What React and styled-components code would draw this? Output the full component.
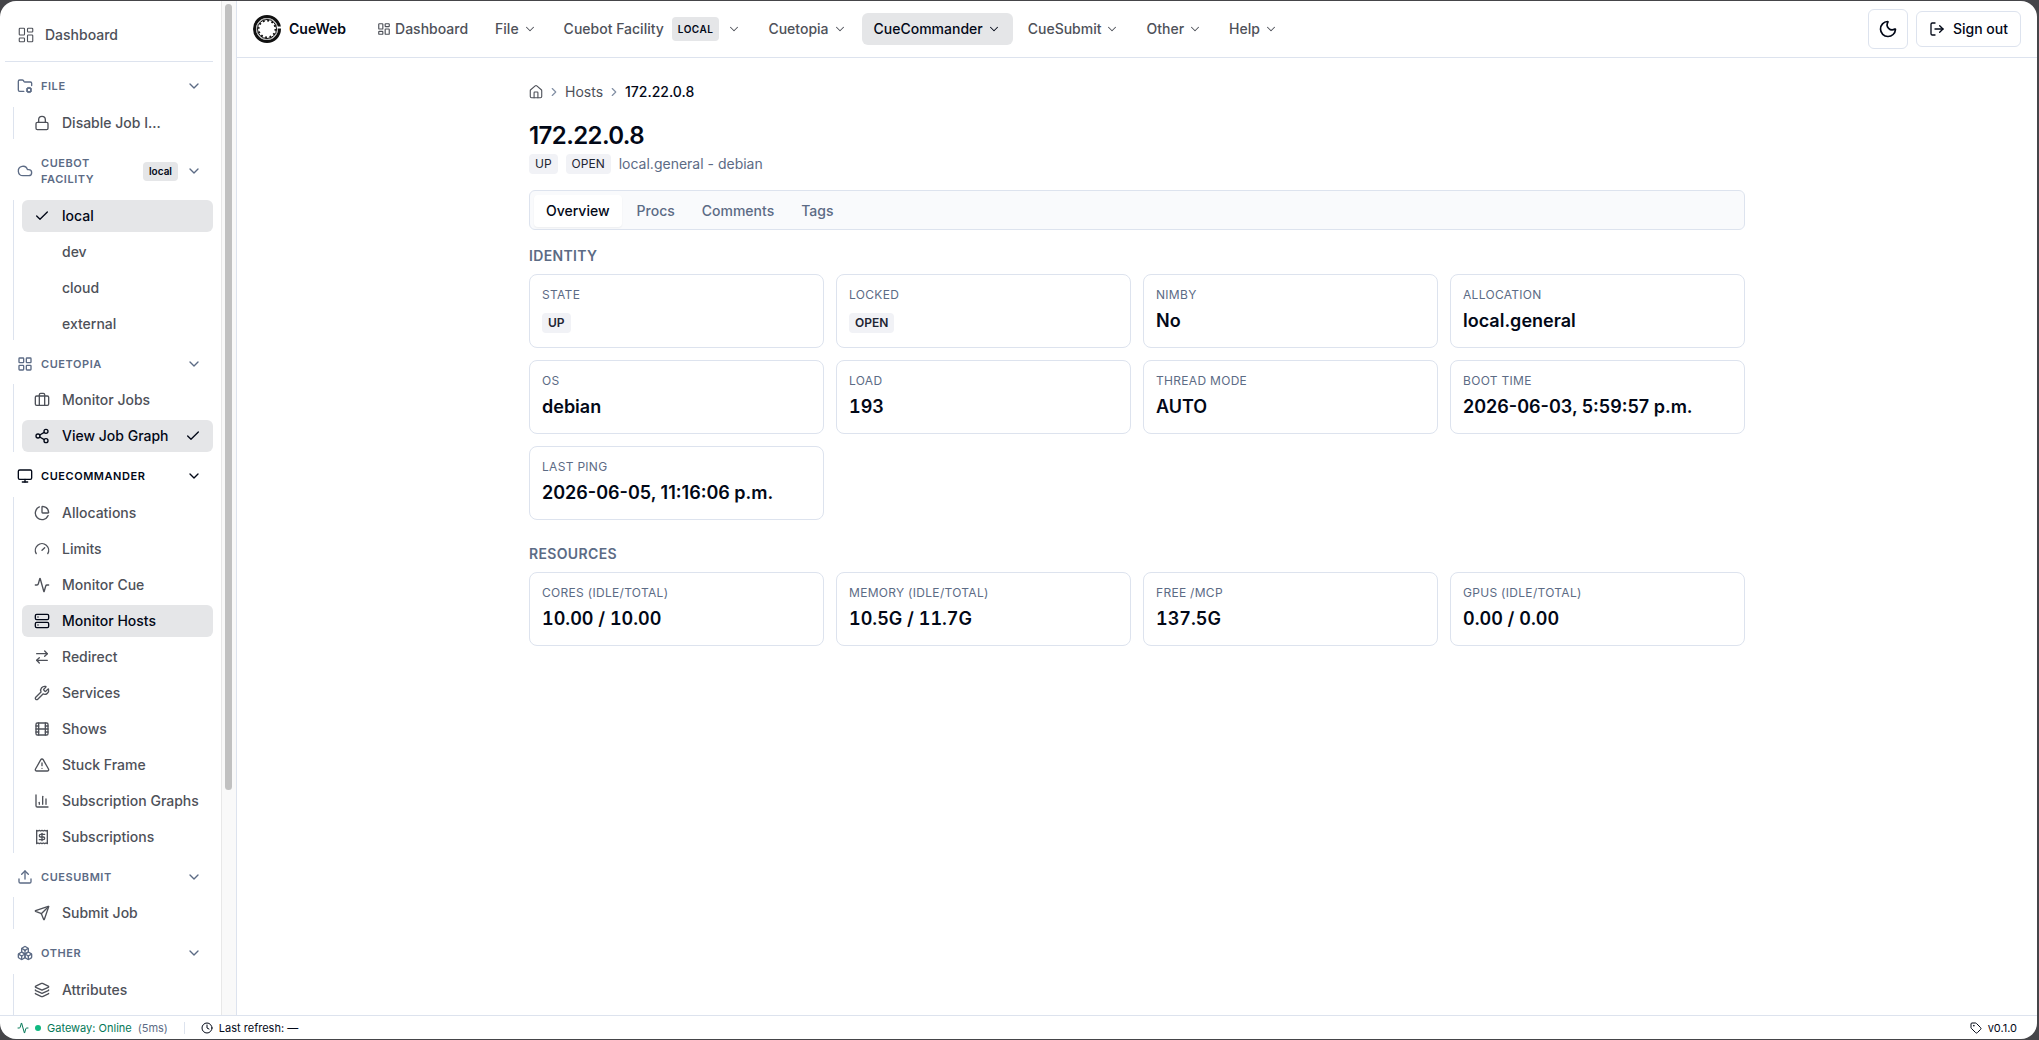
import React from 'react'
import styled, { createGlobalStyle } from 'styled-components'
import {
    Activity, Boxes, Briefcase, ChartColumn, ChartPie, Check, ChevronDown, ChevronRight,
    Clock, Cloud, Film, FolderCog, Gauge, House, Layers, LayoutDashboard, LayoutGrid,
    Lock, LogOut, Monitor, Moon, ArrowRightLeft, Receipt, Send, Server, Share2,
    Tag, TriangleAlert, Upload, Wrench
} from 'lucide-react'

const GlobalStyle = createGlobalStyle`
    * {
        box-sizing: border-box;
    }
    body {
        margin: 0;
        background: #454549;
        color: #020817;
        font-family: Inter, "Liberation Sans", sans-serif;
        font-size: 14px;
        line-height: 20px;
    }
    button {
        font: inherit;
        color: inherit;
        background: none;
        border: 0;
        padding: 0;
        cursor: pointer;
    }
    a {
        color: inherit;
        text-decoration: none;
    }
    h1, h2, p, ul, ol, dl, dd {
        margin: 0;
        padding: 0;
        list-style: none;
    }
    svg {
        flex-shrink: 0;
    }
`

const Frame = styled.div`
    height: 100vh;
    padding: 1px 2px 1px 0;
`

const Shell = styled.div`
    height: 100%;
    display: flex;
    flex-direction: column;
    background: #fff;
    border-radius: 16px;
    overflow: hidden;
`

const Columns = styled.div`
    flex: 1;
    min-height: 0;
    display: flex;
`

const Sidebar = styled.aside`
    width: 237px;
    flex-shrink: 0;
    display: flex;
    border-right: 1px solid #dde3ee;
    overflow: hidden;
`

const SideNav = styled.nav`
    flex: 1;
    min-width: 0;
    display: flex;
    flex-direction: column;
    padding: 16px 8px 0 5px;
    overflow: hidden;
`

const ScrollTrack = styled.div`
    width: 15px;
    padding: 3px;
    background: #f9f9f9;
    border-left: 1px solid #e8e8e8;
`

const ScrollThumb = styled.div`
    height: 78%;
    width: 7px;
    border-radius: 4px;
    background: #c1c1c1;
`

const SideTop = styled.a`
    display: flex;
    align-items: center;
    flex-shrink: 0;
    gap: 10px;
    height: 36px;
    margin-bottom: 8px;
    padding-left: 12px;
    font-weight: 500;
    color: #4e5159;
`

const SideDivider = styled.div`
    height: 1px;
    flex-shrink: 0;
    background: #dde3ee;
`

const SectionButton = styled.button`
    display: flex;
    align-items: center;
    gap: 8px;
    width: 100%;
    margin: 8px 0 4px;
    padding: 8px 11px 8px 12px;
    font-size: 11px;
    font-weight: 600;
    line-height: 1.5;
    letter-spacing: 0.05em;
    text-align: left;
    text-transform: uppercase;
    color: ${props => props.$active ? '#020817' : '#5c6b85'};
`

const SectionLabel = styled.span`
    flex: 1;
`

const SideBadge = styled.span`
    padding: 1px 6px;
    border-radius: 4px;
    background: #e5e6e8;
    color: #020817;
    font-size: 10px;
    font-weight: 600;
    line-height: 17px;
    letter-spacing: 0;
    text-transform: none;
`

const SideList = styled.ul`
    display: flex;
    flex-direction: column;
    gap: 4px;
    margin-left: 8px;
    padding-left: 8px;
    border-left: 1px solid #dde3ee;
`

const SideGroup = styled.div`
    flex-shrink: 0;

    &:last-child {
        flex: 1;
        display: flex;
        flex-direction: column;
    }
    &:last-child ${SideList} {
        flex: 1;
    }
`

const SideLink = styled.a`
    display: flex;
    align-items: center;
    gap: 12px;
    height: 32px;
    padding: 0 12px;
    border-radius: 6px;
    font-weight: 500;
    white-space: nowrap;
    color: ${props => props.$active ? '#020817' : '#4e5159'};
    background: ${props => props.$active ? '#e5e6e8' : 'transparent'};
`

const IconSlot = styled.span`
    width: 16px;
    height: 16px;
    flex-shrink: 0;
`

const SideText = styled.span`
    flex: 1;
`

const Content = styled.div`
    flex: 1;
    min-width: 0;
`

const TopBar = styled.header`
    display: flex;
    align-items: center;
    height: 57px;
    padding: 0 16px;
    border-bottom: 1px solid #dde3ee;
`

const Brand = styled.a`
    display: flex;
    align-items: center;
    gap: 8px;
    margin-right: 19px;
    font-weight: 600;
`

const Menu = styled.nav`
    display: flex;
    flex: 1;
    gap: 3px;
`

const MenuButton = styled.button`
    display: flex;
    align-items: center;
    gap: ${props => props.$wide ? 8 : 4}px;
    height: 32px;
    padding: 0 12px;
    border-radius: 6px;
    font-weight: 500;
    color: ${props => props.$active ? '#020817' : '#4e5159'};
    background: ${props => props.$active ? '#e5e6e8' : 'transparent'};
`

const FacilityBadge = styled.span`
    padding: 4px 6px;
    border-radius: 4px;
    background: #e5e6e8;
    color: #020817;
    font-size: 10px;
    font-weight: 600;
    line-height: 16px;
    letter-spacing: 0.05em;
`

const Actions = styled.div`
    display: flex;
    align-items: center;
    gap: 8px;
`

const ThemeButton = styled.button`
    display: flex;
    align-items: center;
    justify-content: center;
    width: 40px;
    height: 40px;
    border: 1px solid #dde3ee;
    border-radius: 6px;
`

const SignOut = styled.button`
    display: flex;
    align-items: center;
    gap: 8px;
    height: 36px;
    padding: 0 12px;
    border: 1px solid #dde3ee;
    border-radius: 6px;
    font-weight: 500;
`

const Page = styled.main`
    max-width: 1280px;
    margin: 0 auto;
    padding: 24px 32px;
`

const Crumbs = styled.ol`
    display: flex;
    align-items: center;
    gap: 4px;
    margin-bottom: 18px;
    color: #4e5159;

    li, a {
        display: flex;
    }
`

const CurrentCrumb = styled.span`
    font-weight: 500;
    color: #020817;
`

const Title = styled.h1`
    font-size: 24px;
    line-height: 32px;
    font-weight: 600;
    letter-spacing: -0.025em;
`

const SubTitle = styled.div`
    display: flex;
    align-items: center;
    gap: 8px;
    margin: 2px 0 16px;
    color: #5c6b85;
`

const Badge = styled.span`
    display: inline-block;
    padding: 2px 6px;
    border-radius: 4px;
    background: #f1f2f6;
    color: #1e2533;
    font-size: 12px;
    line-height: 16px;
    font-weight: ${props => props.$strong ? 600 : 400};
`

const TabBar = styled.div`
    display: flex;
    gap: 3px;
    height: 40px;
    padding: 4px;
    border: 1px solid #dde3ee;
    border-radius: 6px;
    background: #f9fafc;
`

const Tab = styled.button`
    height: 32px;
    padding: 0 12px;
    border-radius: 4px;
    font-weight: 500;
    color: ${props => props.$active ? '#020817' : '#5c6b85'};
    background: ${props => props.$active ? '#fff' : 'transparent'};
    box-shadow: ${props => props.$active ? '0 1px 2px rgba(0, 0, 0, 0.05)' : 'none'};
`

const Section = styled.section`
    margin-top: ${props => props.$first ? 16 : 24}px;
`

const SectionTitle = styled.h2`
    margin-bottom: 8px;
    font-size: 14px;
    line-height: 20px;
    font-weight: 600;
    letter-spacing: 0.025em;
    text-transform: uppercase;
    color: #5c6b85;
`

const Cards = styled.dl`
    display: grid;
    grid-template-columns: repeat(4, 1fr);
    gap: 12px;
`

const Card = styled.div`
    padding: 12px;
    border: 1px solid #dde3ee;
    border-radius: 8px;
`

const CardLabel = styled.dt`
    margin-bottom: 4px;
    font-size: 12px;
    line-height: 16px;
    letter-spacing: 0.025em;
    text-transform: uppercase;
    color: #5c6b85;
`

const CardValue = styled.dd`
    height: 28px;
    font-size: 18px;
    line-height: 28px;
    font-weight: 600;
    font-variant-numeric: ${props => props.$tabular ? 'tabular-nums' : 'normal'};
`

const StatusBar = styled.footer`
    display: flex;
    align-items: center;
    height: 24px;
    padding: 0 20px 0 17px;
    border-top: 1px solid #dde3ee;
    font-size: 11px;
    line-height: 16px;
`

const Gateway = styled.div`
    display: flex;
    align-items: center;
    gap: 6px;
    color: #047857;
`

const Dot = styled.span`
    width: 6px;
    height: 6px;
    border-radius: 50%;
    background: #10b981;
`

const Latency = styled.span`
    color: #5c6b85;
`

const StatusDivider = styled.span`
    width: 1px;
    height: 12px;
    margin: 0 16px;
    background: #dde3ee;
`

const StatusItem = styled.div`
    display: flex;
    align-items: center;
    gap: 6px;
`

const Version = styled(StatusItem)`
    margin-left: auto;
`

const sections = [
    {
        title: 'File',
        icon: FolderCog,
        items: [{ label: 'Disable Job I...', icon: Lock }]
    },
    {
        title: 'Cuebot Facility',
        icon: Cloud,
        badge: 'local',
        items: [
            { label: 'local', icon: Check, active: true },
            { label: 'dev' },
            { label: 'cloud' },
            { label: 'external' }
        ]
    },
    {
        title: 'Cuetopia',
        icon: LayoutGrid,
        items: [
            { label: 'Monitor Jobs', icon: Briefcase },
            { label: 'View Job Graph', icon: Share2, active: true, checked: true }
        ]
    },
    {
        title: 'CueCommander',
        icon: Monitor,
        active: true,
        items: [
            { label: 'Allocations', icon: ChartPie },
            { label: 'Limits', icon: Gauge },
            { label: 'Monitor Cue', icon: Activity },
            { label: 'Monitor Hosts', icon: Server, active: true },
            { label: 'Redirect', icon: ArrowRightLeft },
            { label: 'Services', icon: Wrench },
            { label: 'Shows', icon: Film },
            { label: 'Stuck Frame', icon: TriangleAlert },
            { label: 'Subscription Graphs', icon: ChartColumn },
            { label: 'Subscriptions', icon: Receipt }
        ]
    },
    {
        title: 'CueSubmit',
        icon: Upload,
        items: [{ label: 'Submit Job', icon: Send }]
    },
    {
        title: 'Other',
        icon: Boxes,
        items: [{ label: 'Attributes', icon: Layers }]
    }
]

const menus = [
    { label: 'File' },
    { label: 'Cuebot Facility', badge: 'LOCAL' },
    { label: 'Cuetopia' },
    { label: 'CueCommander', active: true },
    { label: 'CueSubmit' },
    { label: 'Other' },
    { label: 'Help' }
]

const tabs = ['Overview', 'Procs', 'Comments', 'Tags']

const identity = [
    { label: 'State', value: 'UP', badge: true },
    { label: 'Locked', value: 'OPEN', badge: true },
    { label: 'Nimby', value: 'No' },
    { label: 'Allocation', value: 'local.general' },
    { label: 'OS', value: 'debian' },
    { label: 'Load', value: '193', tabular: true },
    { label: 'Thread mode', value: 'AUTO' },
    { label: 'Boot time', value: '2026-06-03, 5:59:57 p.m.' },
    { label: 'Last ping', value: '2026-06-05, 11:16:06 p.m.' }
]

const resources = [
    { label: 'Cores (idle/total)', value: '10.00 / 10.00', tabular: true },
    { label: 'Memory (idle/total)', value: '10.5G / 11.7G', tabular: true },
    { label: 'Free /mcp', value: '137.5G', tabular: true },
    { label: 'GPUs (idle/total)', value: '0.00 / 0.00', tabular: true }
]

const Logo = () => (
    <svg width="28" height="28" viewBox="0 0 56 56" fill="none" aria-hidden="true">
        <circle cx="28" cy="28" r="25" stroke="#111" strokeWidth="6" />
        <circle cx="28" cy="28" r="21" stroke="#aaa" strokeWidth="2" />
        <circle cx="28" cy="28" r="19" stroke="#111" strokeWidth="2" />
        <circle cx="28" cy="28" r="17" stroke="#111" strokeWidth="4" strokeDasharray="3.5 5.4" />
        <path d="M48 25h8" stroke="#fff" strokeWidth="4" />
    </svg>
)

const SideSection = ({ section }) => {
    const Icon = section.icon
    return (
        <SideGroup>
            <SectionButton type='button' $active={section.active}>
                <Icon size={16} />
                <SectionLabel>{section.title}</SectionLabel>
                {section.badge && <SideBadge>{section.badge}</SideBadge>}
                <ChevronDown size={16} />
            </SectionButton>
            <SideList>
                {section.items.map(({ label, icon: ItemIcon, active, checked }) => (
                    <li key={label}>
                        <SideLink href='#' $active={active}>
                            {ItemIcon ? <ItemIcon size={16} /> : <IconSlot />}
                            <SideText>{label}</SideText>
                            {checked && <Check size={16} />}
                        </SideLink>
                    </li>
                ))}
            </SideList>
        </SideGroup>
    )
}

const CardGrid = ({ items }) => (
    <Cards>
        {items.map(({ label, value, badge, tabular }) => (
            <Card key={label}>
                <CardLabel>{label}</CardLabel>
                <CardValue $tabular={tabular}>
                    {badge ? <Badge $strong>{value}</Badge> : value}
                </CardValue>
            </Card>
        ))}
    </Cards>
)

const App = () => {
    return (
    <>
    <GlobalStyle />
    <Frame>
        <Shell>
            <Columns>
                <Sidebar>
                    <SideNav>
                        <SideTop href='#'>
                            <LayoutDashboard size={18} strokeWidth={1.5} /> Dashboard
                        </SideTop>
                        <SideDivider />
                        {sections.map(section => (
                            <SideSection key={section.title} section={section} />
                        ))}
                    </SideNav>
                    <ScrollTrack>
                        <ScrollThumb />
                    </ScrollTrack>
                </Sidebar>
                <Content>
                    <TopBar>
                        <Brand href='#'>
                            <Logo /> CueWeb
                        </Brand>
                        <Menu>
                            <MenuButton as='a' href='#'>
                                <LayoutDashboard size={14} /> Dashboard
                            </MenuButton>
                            {menus.map(({ label, badge, active }) => (
                                <MenuButton key={label} type='button' $active={active} $wide={!!badge}>
                                    {label}
                                    {badge && <FacilityBadge>{badge}</FacilityBadge>}
                                    <ChevronDown size={14} strokeWidth={1.75} />
                                </MenuButton>
                            ))}
                        </Menu>
                        <Actions>
                            <ThemeButton type='button' aria-label='Toggle theme'>
                                <Moon size={20} />
                            </ThemeButton>
                            <SignOut type='button'>
                                <LogOut size={16} /> Sign out
                            </SignOut>
                        </Actions>
                    </TopBar>
                    <Page>
                        <Crumbs>
                            <li>
                                <a href='#' aria-label='Home'>
                                    <House size={14} viewBox='1 1 22 22' strokeWidth={1.75} />
                                </a>
                            </li>
                            <li><ChevronRight size={14} color='#8390a5' /></li>
                            <li><a href='#'>Hosts</a></li>
                            <li><ChevronRight size={14} color='#8390a5' /></li>
                            <li><CurrentCrumb>172.22.0.8</CurrentCrumb></li>
                        </Crumbs>
                        <Title>172.22.0.8</Title>
                        <SubTitle>
                            <Badge>UP</Badge>
                            <Badge>OPEN</Badge>
                            <span>local.general - debian</span>
                        </SubTitle>
                        <TabBar role='tablist'>
                            {tabs.map((tab, i) => (
                                <Tab key={tab} type='button' role='tab' aria-selected={i === 0} $active={i === 0}>
                                    {tab}
                                </Tab>
                            ))}
                        </TabBar>
                        <Section $first>
                            <SectionTitle>Identity</SectionTitle>
                            <CardGrid items={identity} />
                        </Section>
                        <Section>
                            <SectionTitle>Resources</SectionTitle>
                            <CardGrid items={resources} />
                        </Section>
                    </Page>
                </Content>
            </Columns>
            <StatusBar>
                <Gateway>
                    <Activity size={12} />
                    <Dot />
                    <span>Gateway: Online</span>
                    <Latency>(5ms)</Latency>
                </Gateway>
                <StatusDivider />
                <StatusItem>
                    <Clock size={12} /> Last refresh: —
                </StatusItem>
                <Version>
                    <Tag size={12} /> v0.1.0
                </Version>
            </StatusBar>
        </Shell>
    </Frame>
    </>
    )
}

export default App
